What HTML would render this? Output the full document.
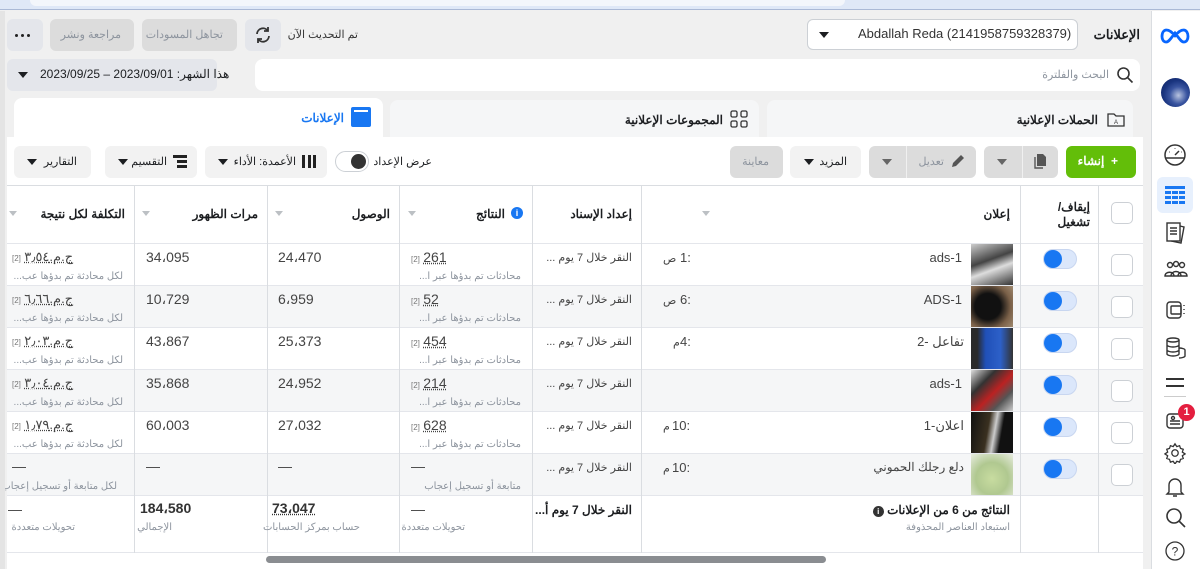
<!DOCTYPE html>
<html><head><meta charset="utf-8">
<style>
*{box-sizing:border-box;margin:0;padding:0}
body{width:1200px;height:569px;overflow:hidden;background:#f0f0f0;font-family:"Liberation Sans","Noto Sans CJK SC",sans-serif;font-size:12px;color:#1c1e21;position:relative}
.a{position:absolute}
.r{direction:rtl;text-align:right;white-space:nowrap}
.btn{position:absolute;background:#e4e6eb;border-radius:6px}
.g{color:#8d949e}
.caret{width:0;height:0;border-left:5px solid transparent;border-right:5px solid transparent;border-top:6px solid #1c1e21;position:absolute}
.scaret{width:0;height:0;border-left:4px solid transparent;border-right:4px solid transparent;border-top:5px solid #bcc0c4;position:absolute}
.vl{position:absolute;width:1px;background:#dadde1}
.row{position:absolute;left:7px;width:1136px;height:42px;border-top:1px solid #e4e6eb}
.cb{position:absolute;left:1104px;width:22px;height:22px;border:1px solid #ccd0d5;border-radius:5px;background:#fff}
.tg{position:absolute;left:1036px;width:34px;height:20px;border-radius:10px;background:#dbe7fb;border:1px solid #c8d6f0}
.tg:after{content:"";position:absolute;left:0;top:0;width:18px;height:18px;border-radius:50%;background:#1877f2}
.th{position:absolute;left:964px;width:42px;height:41px}
.num{font-size:14px;color:#444}
.sub{font-size:10px;color:#8d949e}
.dot{text-decoration:underline dotted;}
.b2{font-size:8px;color:#777}
.icon{position:absolute}
.tm{position:absolute;font-size:13px;color:#444}
.tl{position:absolute;font-size:11px;color:#444}
</style></head><body>
<!-- browser top -->
<div class="a" style="left:0;top:0;width:1200px;height:10px;background:#dfe8f7;border-bottom:1px solid #aab9d6"></div>
<div class="a" style="left:30px;top:0;width:815px;height:6px;background:#f3f6fb;border-radius:0 0 8px 8px"></div>
<!-- sidebar -->
<div class="a" style="left:1151px;top:11px;width:49px;height:558px;background:#fff;border-left:1px solid #dadde1"></div>
<svg class="icon" style="left:1160px;top:28px" width="30" height="16" viewBox="0 0 30 16"><path d="M15 8C12 4 9 2 6.5 2C3.5 2 2 5 2 8.5C2 11.5 3.5 14 6 14C9 14 11 10 15 5C19 10 21 14 24 14C26.5 14 28 11.5 28 8.5C28 5 26.5 2 23.5 2C21 2 18 4 15 8" fill="none" stroke="#0866ff" stroke-width="2.8" stroke-linecap="round"/></svg>
<div class="a" style="left:1161px;top:78px;width:29px;height:29px;border-radius:50%;background:radial-gradient(circle at 60% 60%,#b8c4e0,#3a55a0 35%,#1a3580 60%,#0c1f5a)"></div>
<svg class="icon" style="left:1163px;top:143px" width="24" height="24" viewBox="0 0 24 24" fill="none" stroke="#333" stroke-width="1.5"><circle cx="12" cy="12" r="10"/><path d="M3 15h18M12 12l4-4M6 9h.5M12 5v.5M18 9h.5"/></svg>
<div class="a" style="left:1157px;top:177px;width:36px;height:36px;background:#e7f0fd;border-radius:6px"></div>
<svg class="icon" style="left:1164px;top:185px" width="22" height="20" viewBox="0 0 22 20"><rect x="1" y="1" width="20" height="3" fill="#1877f2"/><g fill="#1877f2"><rect x="1" y="6" width="6" height="3"/><rect x="8" y="6" width="6" height="3"/><rect x="15" y="6" width="6" height="3"/><rect x="1" y="11" width="6" height="3"/><rect x="8" y="11" width="6" height="3"/><rect x="15" y="11" width="6" height="3"/><rect x="1" y="16" width="6" height="3"/><rect x="8" y="16" width="6" height="3"/><rect x="15" y="16" width="6" height="3"/></g></svg>
<svg class="icon" style="left:1164px;top:221px" width="24" height="24" viewBox="0 0 24 24" fill="none" stroke="#333" stroke-width="1.4"><rect x="3" y="2" width="13" height="18"/><path d="M16 5l4 1-3 16-10-2M6 7h7M6 10h7M6 13h7"/></svg>
<svg class="icon" style="left:1164px;top:260px" width="24" height="20" viewBox="0 0 24 20" fill="none" stroke="#333" stroke-width="1.4"><circle cx="6" cy="5" r="2.5"/><circle cx="12" cy="4" r="2.5"/><circle cx="18" cy="5" r="2.5"/><path d="M1 16c0-5 9-5 9 0zM7 16c0-6 10-6 10 0zM14 16c0-5 9-5 9 0z"/></svg>
<svg class="icon" style="left:1164px;top:298px" width="24" height="24" viewBox="0 0 24 24" fill="none" stroke="#333" stroke-width="1.4"><rect x="3" y="4" width="14" height="16" rx="3"/><rect x="7" y="8" width="10" height="8" rx="1"/><path d="M20 7v1M20 11v1M20 15v1"/></svg>
<svg class="icon" style="left:1164px;top:336px" width="24" height="24" viewBox="0 0 24 24" fill="none" stroke="#333" stroke-width="1.4"><ellipse cx="9" cy="4" rx="6" ry="2"/><path d="M3 4v14c0 1 3 2 6 2s6-1 6-2V4M3 9c0 1 3 2 6 2s6-1 6-2M3 14c0 1 3 2 6 2s6-1 6-2"/><path d="M15 12c3 0 6 1 6 2v6c0 1-3 2-6 2"/></svg>
<div class="a" style="left:1166px;top:378px;width:18px;height:1.5px;background:#333"></div>
<div class="a" style="left:1166px;top:385px;width:18px;height:1.5px;background:#333"></div>
<div class="a" style="left:1164px;top:396px;width:22px;height:1px;background:#ccc"></div>
<svg class="icon" style="left:1164px;top:409px" width="22" height="22" viewBox="0 0 22 22" fill="none" stroke="#333" stroke-width="1.4"><rect x="3" y="5" width="16" height="14" rx="3"/><path d="M6 12h10M6 15h10"/><circle cx="9" cy="9" r="1.5"/></svg>
<div class="a" style="left:1178px;top:404px;width:17px;height:17px;border-radius:50%;background:#e41e3f;color:#fff;font-weight:bold;font-size:11px;text-align:center;line-height:17px">1</div>
<svg class="icon" style="left:1164px;top:442px" width="22" height="22" viewBox="0 0 24 24" fill="none" stroke="#333" stroke-width="1.4"><circle cx="12" cy="12" r="3.5"/><path d="M12 2l2 3 3-1 1 3 3 1-1 3 3 2-3 2 1 3-3 1-1 3-3-1-2 3-2-3-3 1-1-3-3-1 1-3-3-2 3-2-1-3 3-1 1-3 3 1z"/></svg>
<svg class="icon" style="left:1165px;top:476px" width="20" height="22" viewBox="0 0 20 22" fill="none" stroke="#333" stroke-width="1.4"><path d="M4 16V9a6 6 0 0112 0v7l2 2H2zM8 20h4"/></svg>
<svg class="icon" style="left:1165px;top:507px" width="22" height="22" viewBox="0 0 22 22" fill="none" stroke="#333" stroke-width="1.6"><circle cx="9" cy="9" r="7"/><path d="M14 14l6 6"/></svg>
<svg class="icon" style="left:1165px;top:541px" width="20" height="20" viewBox="0 0 20 20" fill="none" stroke="#333" stroke-width="1.3"><circle cx="10" cy="10" r="9"/><text x="10" y="14.5" font-size="12" text-anchor="middle" fill="#333" stroke="none" font-family="Liberation Sans">?</text></svg>

<!-- header row -->
<div class="a r" style="right:60px;top:27px;font-weight:bold;font-size:13px">الإعلانات</div>
<div class="a" style="left:807px;top:19px;width:271px;height:31px;background:#fff;border:1px solid #ccd0d5;border-radius:6px"></div>
<div class="a" style="left:858px;top:26px;font-size:13px;color:#333">Abdallah Reda (2141958759328379)</div>
<div class="caret" style="left:819px;top:32px"></div>
<div class="btn" style="left:7px;top:19px;width:36px;height:32px"></div>
<div class="a" style="left:15px;top:27px;width:3px;height:3px;background:#222;border-radius:50%;box-shadow:6px 0 #222,12px 0 #222;top:34px"></div>
<div class="btn" style="left:50px;top:19px;width:84px;height:32px;background:#dcdcdc"></div>
<div class="a r g" style="right:1079px;top:28px;font-size:11px">مراجعة ونشر</div>
<div class="btn" style="left:142px;top:19px;width:95px;height:32px;background:#dcdcdc"></div>
<div class="a r g" style="right:977px;top:28px;font-size:11px">تجاهل المسودات</div>
<div class="btn" style="left:245px;top:19px;width:36px;height:32px"></div>
<svg class="icon" style="left:254px;top:26px" width="18" height="18" viewBox="0 0 18 18" fill="none" stroke="#333" stroke-width="1.8"><path d="M3 8a6 6 0 0111-3M15 10a6 6 0 01-11 3"/><path d="M14 1v4h-4M4 17v-4h4"/></svg>
<div class="a r" style="right:842px;top:28px;font-size:11px;color:#333">تم التحديث الآن</div>
<!-- search row -->
<div class="a" style="left:255px;top:59px;width:885px;height:32px;background:#fff;border-radius:8px"></div>
<svg class="icon" style="left:1116px;top:66px" width="18" height="18" viewBox="0 0 18 18" fill="none" stroke="#333" stroke-width="1.6"><circle cx="7.5" cy="7.5" r="5.5"/><path d="M11.5 11.5l5 5"/></svg>
<div class="a r g" style="right:91px;top:68px;font-size:11px">البحث والفلترة</div>
<div class="btn" style="left:7px;top:59px;width:210px;height:32px"></div>
<div class="caret" style="left:18px;top:72px"></div>
<div class="a" style="left:40px;top:67px;font-size:12px;direction:rtl;white-space:nowrap">هذا الشهر: 2023/09/01 – 2023/09/25</div>
<!-- tabs -->
<div class="a" style="left:767px;top:100px;width:366px;height:40px;background:#f5f6f7;border-radius:8px 8px 0 0"></div>
<svg class="icon" style="left:1107px;top:112px" width="18" height="15" viewBox="0 0 18 15" fill="none" stroke="#333" stroke-width="1.3"><path d="M1 2h6l2 2h8v10H1z"/><text x="9" y="12" font-size="6" text-anchor="middle" fill="#333" stroke="none">A</text></svg>
<div class="a r" style="right:102px;top:113px;font-weight:bold;font-size:12px">الحملات الإعلانية</div>
<div class="a" style="left:390px;top:100px;width:369px;height:40px;background:#f5f6f7;border-radius:8px 8px 0 0"></div>
<svg class="icon" style="left:730px;top:110px" width="18" height="18" viewBox="0 0 18 18" fill="none" stroke="#333" stroke-width="1.3"><rect x="1" y="1" width="6" height="6" rx="1.5"/><rect x="11" y="1" width="6" height="6" rx="1.5"/><rect x="1" y="11" width="6" height="6" rx="1.5"/><rect x="11" y="11" width="6" height="6" rx="1.5"/></svg>
<div class="a r" style="right:477px;top:113px;font-weight:bold;font-size:12px">المجموعات الإعلانية</div>
<div class="a" style="left:14px;top:98px;width:369px;height:45px;background:#fff;border-radius:8px 8px 0 0"></div>
<div class="a" style="left:351px;top:107px;width:20px;height:20px;background:#1877f2;border-radius:2px"><div style="margin:3px;height:2px;background:#fff;width:14px"></div></div>
<div class="a r" style="right:856px;top:111px;font-weight:bold;font-size:12px;color:#1877f2">الإعلانات</div>
<!-- panel -->
<div class="a" style="left:7px;top:137px;width:1136px;height:432px;background:#fff"></div>
<!-- toolbar -->
<div class="btn" style="left:1066px;top:146px;width:70px;height:32px;background:#63be09"></div>
<div class="a r" style="right:82px;top:154px;color:#fff;font-weight:bold;font-size:12px">+&nbsp; إنشاء</div>
<div class="btn" style="left:984px;top:146px;width:74px;height:32px;background:#dcdcdc"></div>
<div class="a" style="left:1022px;top:146px;width:1px;height:32px;background:#f0f0f0"></div>
<div class="caret" style="left:997px;top:159px;border-top-color:#666"></div>
<svg class="icon" style="left:1033px;top:153px" width="14" height="16" viewBox="0 0 14 16"><path d="M4 1h6l3 3v9H4z" fill="#555"/><path d="M2 4v11h8" fill="none" stroke="#555" stroke-width="1.4"/></svg>
<div class="btn" style="left:869px;top:146px;width:107px;height:32px;background:#dcdcdc"></div>
<div class="a" style="left:906px;top:146px;width:1px;height:32px;background:#f0f0f0"></div>
<div class="caret" style="left:882px;top:159px;border-top-color:#666"></div>
<svg class="icon" style="left:950px;top:153px" width="16" height="16" viewBox="0 0 16 16"><path d="M2 14l1-4 8-8 3 3-8 8z" fill="#555"/></svg>
<div class="a r g" style="right:256px;top:155px;font-size:11px">تعديل</div>
<div class="btn" style="left:790px;top:146px;width:71px;height:32px;background:#f2f2f2"></div>
<div class="caret" style="left:804px;top:159px"></div>
<div class="a r" style="right:353px;top:155px;font-size:11px">المزيد</div>
<div class="btn" style="left:730px;top:146px;width:53px;height:32px;background:#dcdcdc"></div>
<div class="a r g" style="right:431px;top:155px;font-size:11px">معاينة</div>
<div class="a r" style="right:768px;top:155px;font-size:11px">عرض الإعداد</div>
<div class="a" style="left:335px;top:151px;width:34px;height:21px;border-radius:11px;background:#fff;border:1px solid #ccd0d5"></div>
<div class="a" style="left:351px;top:154px;width:15px;height:15px;border-radius:50%;background:#333"></div>
<div class="btn" style="left:205px;top:146px;width:122px;height:32px;background:#f2f2f2"></div>
<div class="a" style="left:302px;top:155px;width:14px;height:13px;border-left:3px solid #222;border-right:3px solid #222"><div style="margin:0 auto;width:3px;height:13px;background:#222"></div></div>
<div class="a r" style="right:904px;top:155px;font-size:11px">الأعمدة: الأداء</div>
<div class="caret" style="left:218px;top:159px"></div>
<div class="btn" style="left:105px;top:146px;width:92px;height:32px;background:#f2f2f2"></div>
<svg class="icon" style="left:173px;top:155px" width="14" height="14" viewBox="0 0 14 14"><rect x="0" y="0" width="14" height="3" fill="#222"/><rect x="4" y="5" width="10" height="3" fill="#222"/><rect x="4" y="10" width="10" height="3" fill="#222"/></svg>
<div class="a r" style="right:1033px;top:155px;font-size:11px">التقسيم</div>
<div class="caret" style="left:118px;top:159px"></div>
<div class="btn" style="left:14px;top:146px;width:77px;height:32px;background:#f2f2f2"></div>
<div class="a r" style="right:1123px;top:155px;font-size:11px">التقارير</div>
<div class="caret" style="left:27px;top:159px"></div>
<!-- table header -->
<div class="a" style="left:7px;top:185px;width:1136px;height:1px;background:#dadde1"></div>
<div class="a r" style="right:110px;top:200px;font-weight:bold;font-size:12px;line-height:15px">إيقاف/<br>تشغيل</div>
<div class="a r" style="right:190px;top:207px;font-weight:bold">إعلان</div>
<div class="scaret" style="left:702px;top:211px"></div>
<div class="a r" style="right:568px;top:207px;font-weight:bold">إعداد الإسناد</div>
<div class="a" style="left:511px;top:207px;width:12px;height:12px;border-radius:50%;background:#1877f2;color:#fff;font-size:9px;font-weight:bold;text-align:center;line-height:12px">i</div>
<div class="a r" style="right:695px;top:207px;font-weight:bold">النتائج</div>
<div class="scaret" style="left:408px;top:211px"></div>
<div class="a r" style="right:810px;top:207px;font-weight:bold">الوصول</div>
<div class="scaret" style="left:275px;top:211px"></div>
<div class="a r" style="right:942px;top:207px;font-weight:bold">مرات الظهور</div>
<div class="scaret" style="left:142px;top:211px"></div>
<div class="a r" style="right:1075px;top:207px;font-weight:bold">التكلفة لكل نتيجة</div>
<div class="scaret" style="left:9px;top:211px"></div>

<!-- rows -->
<div class="row" style="top:243px;background:#fff"></div>
<div class="row" style="top:285px;background:#f5f6f7"></div>
<div class="row" style="top:327px;background:#fff"></div>
<div class="row" style="top:369px;background:#f5f6f7"></div>
<div class="row" style="top:411px;background:#fff"></div>
<div class="row" style="top:453px;background:#f5f6f7"></div>
<div class="row" style="top:495px;height:58px;background:#fff"></div>
<div class="a" style="left:7px;top:552px;width:1136px;height:1px;background:#e4e6eb"></div>

<!-- vertical lines -->
<div class="vl" style="left:1098px;top:185px;height:368px"></div>
<div class="vl" style="left:1020px;top:185px;height:368px"></div>
<div class="vl" style="left:641px;top:185px;height:368px"></div>
<div class="vl" style="left:532px;top:185px;height:368px"></div>
<div class="vl" style="left:399px;top:185px;height:368px"></div>
<div class="vl" style="left:267px;top:185px;height:368px"></div>
<div class="vl" style="left:134px;top:185px;height:368px"></div>

<!-- checkboxes/toggles/thumbs -->
<div class="cb" style="left:1111px;top:202px;"></div>
<div class="cb" style="left:1111px;top:254px"></div><div class="tg" style="left:1043px;top:249px"></div>
<div class="cb" style="left:1111px;top:296px"></div><div class="tg" style="left:1043px;top:291px"></div>
<div class="cb" style="left:1111px;top:338px"></div><div class="tg" style="left:1043px;top:333px"></div>
<div class="cb" style="left:1111px;top:380px"></div><div class="tg" style="left:1043px;top:375px"></div>
<div class="cb" style="left:1111px;top:422px"></div><div class="tg" style="left:1043px;top:417px"></div>
<div class="cb" style="left:1111px;top:464px"></div><div class="tg" style="left:1043px;top:459px"></div>
<div class="th" style="left:971px;top:244px;background:linear-gradient(160deg,#ccc,#444 40%,#ddd 60%,#333)"></div>
<div class="th" style="left:971px;top:286px;background:radial-gradient(circle at 40% 50%,#111 40%,#7a6048 70%,#a08a70)"></div>
<div class="th" style="left:971px;top:328px;background:linear-gradient(90deg,#2a2a2a 15%,#2050b8 35%,#2d60c8 70%,#333)"></div>
<div class="th" style="left:971px;top:370px;background:linear-gradient(135deg,#ddd,#333 30%,#b22 55%,#555 75%,#ccc)"></div>
<div class="th" style="left:971px;top:412px;background:linear-gradient(100deg,#111,#3a3020 40%,#ccc 55%,#111 70%)"></div>
<div class="th" style="left:971px;top:454px;background:radial-gradient(circle at 50% 60%,#c8dca0,#b0c890 50%,#e8ece0)"></div>

<!-- names -->
<div class="a r" style="right:238px;top:250px;font-size:13px;color:#444">ads-1</div>
<div class="a r" style="right:238px;top:292px;font-size:13px;color:#444">ADS-1</div>
<div class="a r" style="right:236px;top:334px;font-size:13px;color:#444">تفاعل -2</div>
<div class="a r" style="right:238px;top:376px;font-size:13px;color:#444">ads-1</div>
<div class="a r" style="right:236px;top:418px;font-size:13px;color:#444">اعلان-1</div>
<div class="a r" style="right:236px;top:460px;font-size:12px;color:#444">دلع رجلك الحموني</div>
<!-- times -->
<div class="tl" style="left:663px;top:252px">ص</div><div class="tm" style="left:680px;top:250px">1:</div>
<div class="tl" style="left:663px;top:294px">ص</div><div class="tm" style="left:680px;top:292px">6:</div>
<div class="tl" style="left:673px;top:336px">م</div><div class="tm" style="left:680px;top:334px">4:</div>
<div class="tl" style="left:663px;top:420px">م</div><div class="tm" style="left:672px;top:418px">10:</div>
<div class="tl" style="left:663px;top:462px">م</div><div class="tm" style="left:672px;top:460px">10:</div>
<!-- attribution -->
<div class="a r" style="right:568px;top:251px;font-size:11px;color:#444">النقر خلال 7 يوم ...</div>
<div class="a r" style="right:568px;top:293px;font-size:11px;color:#444">النقر خلال 7 يوم ...</div>
<div class="a r" style="right:568px;top:335px;font-size:11px;color:#444">النقر خلال 7 يوم ...</div>
<div class="a r" style="right:568px;top:377px;font-size:11px;color:#444">النقر خلال 7 يوم ...</div>
<div class="a r" style="right:568px;top:419px;font-size:11px;color:#444">النقر خلال 7 يوم ...</div>
<div class="a r" style="right:568px;top:461px;font-size:11px;color:#444">النقر خلال 7 يوم ...</div>

<!-- results -->
<div class="a" style="left:411px;top:249px"><span class="b2">[2]</span> <span class="num dot">261</span></div>
<div class="a r sub" style="right:679px;top:271px">محادثات تم بدؤها عبر ا...</div>
<div class="a" style="left:411px;top:291px"><span class="b2">[2]</span> <span class="num dot">52</span></div>
<div class="a r sub" style="right:679px;top:313px">محادثات تم بدؤها عبر ا...</div>
<div class="a" style="left:411px;top:333px"><span class="b2">[2]</span> <span class="num dot">454</span></div>
<div class="a r sub" style="right:679px;top:355px">محادثات تم بدؤها عبر ا...</div>
<div class="a" style="left:411px;top:375px"><span class="b2">[2]</span> <span class="num dot">214</span></div>
<div class="a r sub" style="right:679px;top:397px">محادثات تم بدؤها عبر ا...</div>
<div class="a" style="left:411px;top:417px"><span class="b2">[2]</span> <span class="num dot">628</span></div>
<div class="a r sub" style="right:679px;top:439px">محادثات تم بدؤها عبر ا...</div>
<div class="a num" style="left:411px;top:458px">—</div>
<div class="a r sub" style="right:679px;top:481px">متابعة أو تسجيل إعجاب</div>
<!-- reach -->
<div class="a num" style="left:278px;top:249px">24،470</div>
<div class="a num" style="left:278px;top:291px">6،959</div>
<div class="a num" style="left:278px;top:333px">25،373</div>
<div class="a num" style="left:278px;top:375px">24،952</div>
<div class="a num" style="left:278px;top:417px">27،032</div>
<div class="a num" style="left:278px;top:458px">—</div>
<!-- impressions -->
<div class="a num" style="left:146px;top:249px">34،095</div>
<div class="a num" style="left:146px;top:291px">10،729</div>
<div class="a num" style="left:146px;top:333px">43،867</div>
<div class="a num" style="left:146px;top:375px">35،868</div>
<div class="a num" style="left:146px;top:417px">60،003</div>
<div class="a num" style="left:146px;top:458px">—</div>
<!-- cost -->
<div class="a" style="left:12px;top:249px"><span class="b2">[2]</span> <span class="dot" style="font-size:13px;color:#444">ج.م.٣٫٥٤</span></div>
<div class="a r sub" style="right:1077px;top:271px">لكل محادثة تم بدؤها عب...</div>
<div class="a" style="left:12px;top:291px"><span class="b2">[2]</span> <span class="dot" style="font-size:13px;color:#444">ج.م.٦٫٦٦</span></div>
<div class="a r sub" style="right:1077px;top:313px">لكل محادثة تم بدؤها عب...</div>
<div class="a" style="left:12px;top:333px"><span class="b2">[2]</span> <span class="dot" style="font-size:13px;color:#444">ج.م.٢٫٠٣</span></div>
<div class="a r sub" style="right:1077px;top:355px">لكل محادثة تم بدؤها عب...</div>
<div class="a" style="left:12px;top:375px"><span class="b2">[2]</span> <span class="dot" style="font-size:13px;color:#444">ج.م.٣٫٠٤</span></div>
<div class="a r sub" style="right:1077px;top:397px">لكل محادثة تم بدؤها عب...</div>
<div class="a" style="left:12px;top:417px"><span class="b2">[2]</span> <span class="dot" style="font-size:13px;color:#444">ج.م.١٫٧٩</span></div>
<div class="a r sub" style="right:1077px;top:439px">لكل محادثة تم بدؤها عب...</div>
<div class="a num" style="left:12px;top:458px">—</div>
<div class="a r sub" style="right:1083px;top:481px">لكل متابعة أو تسجيل إعجاب</div>

<!-- totals -->
<div class="a r" style="right:190px;top:503px;font-weight:bold;font-size:12px">النتائج من 6 من الإعلانات <span style="display:inline-block;width:11px;height:11px;border-radius:50%;background:#333;color:#fff;font-size:8px;text-align:center;line-height:11px">i</span></div>
<div class="a r sub" style="right:190px;top:522px">استبعاد العناصر المحذوفة</div>
<div class="a r" style="right:568px;top:503px;font-weight:bold;font-size:12px">النقر خلال 7 يوم أ...</div>
<div class="a num" style="left:411px;top:501px">—</div>
<div class="a r sub" style="right:735px;top:522px">تحويلات متعددة</div>
<div class="a dot" style="left:272px;top:500px;font-size:14px;font-weight:bold;color:#333">73،047</div>
<div class="a r sub" style="right:840px;top:522px">حساب بمركز الحسابات</div>
<div class="a" style="left:140px;top:500px;font-size:14px;font-weight:bold;color:#333">184،580</div>
<div class="a r sub" style="right:1028px;top:522px">الإجمالي</div>
<div class="a num" style="left:8px;top:501px">—</div>
<div class="a r sub" style="right:1125px;top:522px">تحويلات متعددة</div>
<!-- scrollbar -->
<div class="a" style="left:266px;top:556px;width:560px;height:7px;border-radius:4px;background:#8a8d91"></div>
<div class="a" style="left:0;top:11px;width:5px;height:558px;background:#e4e4e4"></div>
</body></html>
